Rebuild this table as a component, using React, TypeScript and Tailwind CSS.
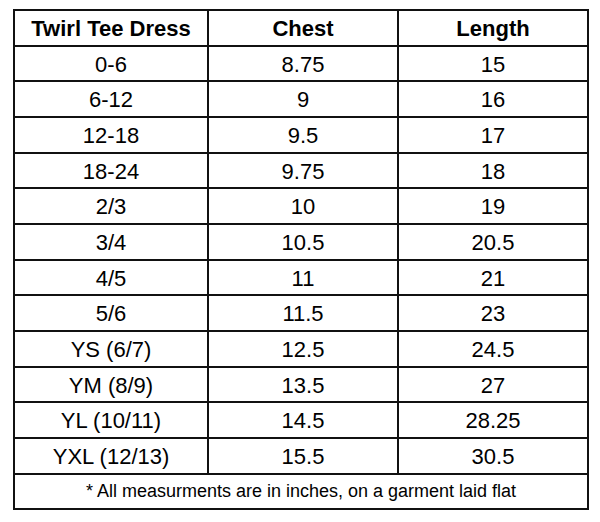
import React from "react";

const rows: [string, string, string][] = [
  ["0-6", "8.75", "15"],
  ["6-12", "9", "16"],
  ["12-18", "9.5", "17"],
  ["18-24", "9.75", "18"],
  ["2/3", "10", "19"],
  ["3/4", "10.5", "20.5"],
  ["4/5", "11", "21"],
  ["5/6", "11.5", "23"],
  ["YS (6/7)", "12.5", "24.5"],
  ["YM (8/9)", "13.5", "27"],
  ["YL (10/11)", "14.5", "28.25"],
  ["YXL (12/13)", "15.5", "30.5"],
];

export default function App() {
  return (
    <div
      className="w-[600px] h-[522px] bg-white pt-[9px] pl-[13px]"
      style={{ fontFamily: '"Liberation Sans", Arial, sans-serif' }}
    >
      <div className="w-[576px] border-t-2 border-l-2 border-r-2 border-[#111] text-black">
        <div className="grid grid-cols-[194px_190px_1fr] h-[35.67px] border-b-2 border-[#111] text-[22px] font-bold">
          <div className="flex items-center justify-center border-r-2 border-[#111] pt-[1px]">Twirl Tee Dress</div>
          <div className="flex items-center justify-center border-r-2 border-[#111] pt-[1px]">Chest</div>
          <div className="flex items-center justify-center pt-[1px]">Length</div>
        </div>
        {rows.map((r) => (
          <div
            key={r[0]}
            className="grid grid-cols-[194px_190px_1fr] h-[35.67px] border-b-2 border-[#111] text-[22px]"
          >
            <div className="flex items-center justify-center border-r-2 border-[#111] pt-[1px]">{r[0]}</div>
            <div className="flex items-center justify-center border-r-2 border-[#111] pt-[1px]">{r[1]}</div>
            <div className="flex items-center justify-center pt-[1px]">{r[2]}</div>
          </div>
        ))}
        <div className="flex items-center justify-center h-[35.67px] border-b-2 border-[#111] text-[18px] pt-[1px]">
          * All measurments are in inches, on a garment laid flat
        </div>
      </div>
    </div>
  );
}
